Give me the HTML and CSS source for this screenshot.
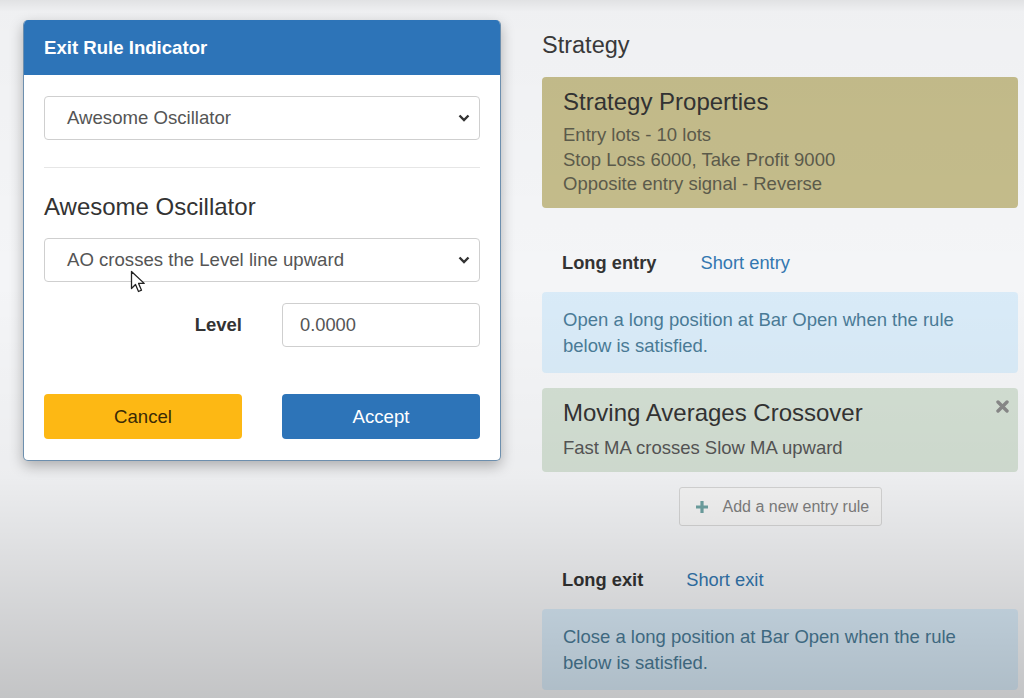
FILE: index.html
```html
<!DOCTYPE html>
<html>
<head>
<meta charset="utf-8">
<link rel="stylesheet" href="styles.css">
</head>
<body>
<div class="backdrop"></div>
<div class="page">
  <div class="left">
    <div class="modal">
      <div class="modal-header">Exit Rule Indicator</div>
      <div class="modal-body">
        <div class="select">
          <span>Awesome Oscillator</span>
          <svg class="chev" width="12" height="8" viewBox="0 0 12 8"><path d="M1.5 1.5 L6 6 L10.5 1.5" fill="none" stroke="#333" stroke-width="2.4"/></svg>
        </div>
        <div class="divider"></div>
        <h2 class="ind-title">Awesome Oscillator</h2>
        <div class="select cursor-host">
          <span>AO crosses the Level line upward</span>
          <svg class="chev" width="12" height="8" viewBox="0 0 12 8"><path d="M1.5 1.5 L6 6 L10.5 1.5" fill="none" stroke="#333" stroke-width="2.4"/></svg>
          <svg class="cursor" width="18" height="24" viewBox="0 0 18 24"><path d="M1.5 1.5 L1.5 18.5 L5.5 14.5 L8.5 21.5 L11.5 20.2 L8.6 13.4 L14.2 13.4 Z" fill="#fff" stroke="#222" stroke-width="1.3" stroke-linejoin="round"/></svg>
        </div>
        <div class="param-row">
          <label class="param-label">Level</label>
          <div class="input">0.0000</div>
        </div>
        <div class="btn-row">
          <button class="btn btn-cancel">Cancel</button>
          <button class="btn btn-accept">Accept</button>
        </div>
      </div>
    </div>
  </div>
  <div class="right">
    <h3 class="section-title">Strategy</h3>
    <div class="card card-props">
      <div class="card-title">Strategy Properties</div>
      <div class="card-text">Entry lots - 10 lots</div>
      <div class="card-text">Stop Loss 6000, Take Profit 9000</div>
      <div class="card-text">Opposite entry signal - Reverse</div>
    </div>
    <div class="tabs tabs-entry">
      <span class="tab active">Long entry</span>
      <span class="tab link">Short entry</span>
    </div>
    <div class="card card-info">Open a long position at Bar Open when the rule below is satisfied.</div>
    <div class="card card-rule">
      <div class="card-title">Moving Averages Crossover</div>
      <div class="card-text">Fast MA crosses Slow MA upward</div>
      <svg class="close" width="13" height="13" viewBox="0 0 13 13"><path d="M2 2 L11 11 M11 2 L2 11" stroke="#888" stroke-width="3.4" stroke-linecap="round"/></svg>
    </div>
    <div class="add-wrap">
      <div class="add-btn">
        <svg width="14" height="14" viewBox="0 0 14 14"><path d="M7 1 V13 M1 7 H13" stroke="#6fa3a3" stroke-width="3.2"/></svg>
        <span>Add a new entry rule</span>
      </div>
    </div>
    <div class="tabs tabs-exit">
      <span class="tab active">Long exit</span>
      <span class="tab link">Short exit</span>
    </div>
    <div class="card card-info card-exit">Close a long position at Bar Open when the rule below is satisfied.</div>
  </div>
</div>
</body>
</html>
```
FILE: styles.css
```css
* { box-sizing: border-box; }
html, body {
  margin: 0;
  height: 698px;
  overflow: hidden;
}
body {
  background: #f4f5f7;
  font-family: "Liberation Sans", Arial, sans-serif;
  color: #333;
  position: relative;
}
.backdrop {
  position: absolute;
  left: 0; top: 0; right: 0; bottom: 0;
  z-index: 1;
  pointer-events: none;
  background: linear-gradient(to bottom,
    rgba(0,0,0,0.08) 0px,
    rgba(0,0,0,0.02) 12px,
    rgba(0,0,0,0.0) 40%,
    rgba(0,0,0,0.03) 68%,
    rgba(0,0,0,0.12) 85%,
    rgba(0,0,0,0.2) 100%);
}
.page {
  display: flex;
  align-items: flex-start;
}
.left {
  width: 542px;
  padding: 20px 0 0 23px;
  flex: none;
}
.modal {
  position: relative;
  z-index: 2;
  width: 478px;
  background: #fff;
  border-radius: 5px;
  border: 1px solid #6d8fae;
  border-top: none;
  box-shadow: 0 5px 14px rgba(0,0,0,0.28);
  overflow: hidden;
}
.modal-header {
  background: #2d74b8;
  color: #fff;
  font-weight: bold;
  font-size: 18.6px;
  height: 55px;
  line-height: 55px;
  padding-left: 20px;
}
.modal-body {
  padding: 21px 20px 21px 20px;
}
.select {
  position: relative;
  height: 44px;
  border: 1px solid #cfcfcf;
  border-radius: 4px;
  display: flex;
  align-items: center;
  justify-content: space-between;
  padding: 0 9px 0 22px;
  font-size: 18.6px;
  color: #555;
}
.chev { flex: none; }
.cursor {
  position: absolute;
  left: 85px;
  top: 31px;
}
.divider {
  height: 1px;
  background: #e6e6e6;
  margin: 27px 0 0 0;
}
.ind-title {
  font-weight: normal;
  font-size: 24px;
  color: #333;
  margin: 27px 0 19px 0;
  line-height: 24px;
}
.param-row {
  display: grid;
  grid-template-columns: 1fr 1fr;
  column-gap: 40px;
  margin-top: 21px;
  align-items: center;
}
.param-label {
  text-align: right;
  font-weight: bold;
  font-size: 18.5px;
  color: #333;
}
.input {
  height: 44px;
  border: 1px solid #cfcfcf;
  border-radius: 4px;
  padding-left: 17px;
  line-height: 42px;
  font-size: 18.3px;
  color: #555;
}
.btn-row {
  display: grid;
  grid-template-columns: 1fr 1fr;
  column-gap: 40px;
  margin-top: 47px;
}
.btn {
  height: 45px;
  border: none;
  border-radius: 4px;
  font-family: "Liberation Sans", Arial, sans-serif;
  font-size: 18.6px;
}
.btn-cancel { background: #fdb814; color: #3a2a06; }
.btn-accept { background: #2d74b8; color: #fff; }

.right {
  width: 476px;
  flex: none;
}
.section-title {
  font-weight: normal;
  font-size: 23.5px;
  color: #3a3a3a;
  margin: 33px 0 20px 0;
  line-height: 24px;
}
.card {
  position: relative;
  border-radius: 4px;
  padding: 0 21px;
}
.card-props {
  background: #c4bc8b;
  height: 131px;
  padding-top: 12px;
}
.card-title {
  font-size: 24px;
  line-height: 26px;
  color: #333;
}
.card-text {
  font-size: 18.5px;
  line-height: 24.5px;
  color: #5c5b4b;
}
.card-props .card-title { margin-bottom: 8px; }
.tabs {
  display: flex;
  font-size: 18.3px;
  line-height: 24px;
  padding-left: 20px;
}
.tab.active { font-weight: bold; color: #333; }
.tab.link { color: #3377b0; }
.tabs-entry { margin-top: 43px; gap: 44px; }
.card-info {
  background: #d9ebf8;
  color: #4a7b97;
  font-size: 18.5px;
  line-height: 26px;
  height: 81px;
  padding-top: 15px;
}
.tabs-entry + .card-info { margin-top: 17px; }
.card-rule {
  margin-top: 15px;
  background: #d3dfd3;
  height: 84px;
  padding-top: 12px;
}
.card-rule .card-text { margin-top: 10px; color: #555; }
.close {
  position: absolute;
  right: 9px;
  top: 12px;
}
.add-wrap {
  display: flex;
  justify-content: center;
  margin-top: 15px;
}
.add-btn {
  width: 203px;
  height: 39px;
  border: 1px solid #d6d6d6;
  border-radius: 3px;
  background: #f6f6f6;
  display: flex;
  align-items: center;
  padding-left: 15px;
  gap: 14px;
  font-size: 16px;
  color: #808080;
}
.tabs-exit { margin-top: 42px; gap: 43px; }
.tabs-exit + .card-info { margin-top: 17px; }
```
